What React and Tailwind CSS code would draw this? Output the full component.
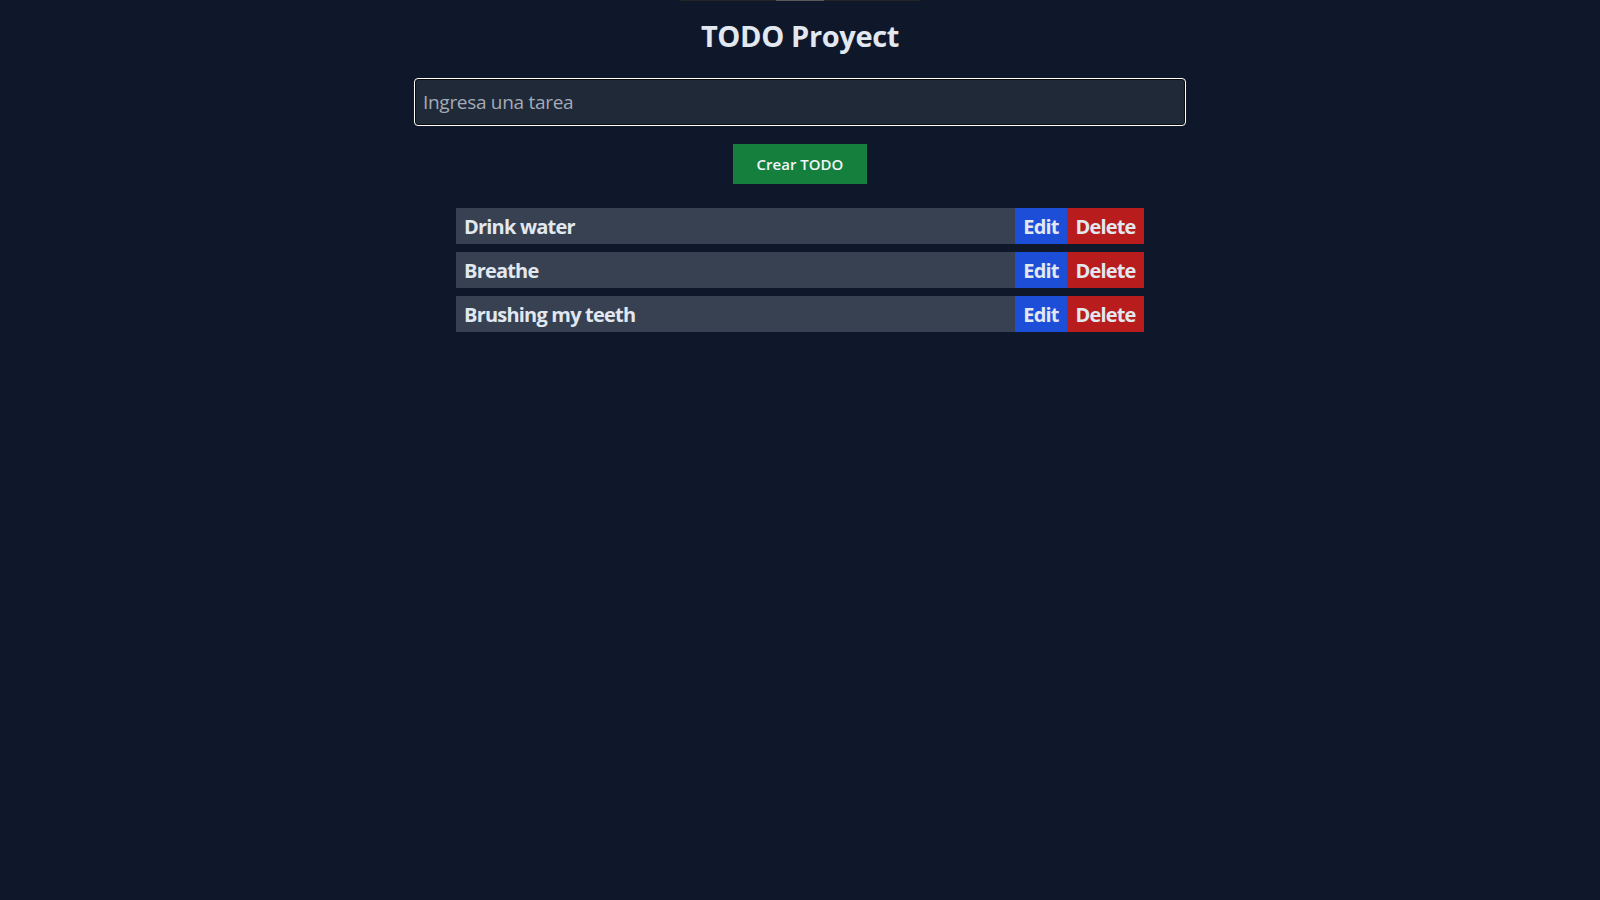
import { useState } from 'react';

const initialTodos = ['Drink water', 'Breathe', 'Brushing my teeth'];

const App = () => {
    const [todos] = useState(initialTodos);

    return (
        <div className="min-h-screen w-full bg-[#0f172a] flex flex-col items-center font-['Open_Sans','Noto_Sans',sans-serif] text-slate-200">
            {/* scrollbar remnant */}
            <div className="w-[241px] h-px bg-[#222326] flex justify-center">
                <div className="w-[48px] h-px bg-[#5a5a5c]"></div>
            </div>

            <h1 className="mt-[17px] text-[29px] font-bold leading-9 tracking-[-0.35px] text-[#e2e8f0]">TODO Proyect</h1>

            <input
                type="text"
                placeholder="Ingresa una tarea"
                className="mt-[24px] w-[772px] h-12 px-2 rounded border border-white bg-[#1f2937] text-[19px] tracking-[-0.3px] text-slate-200 placeholder:text-[#a3abb8] shadow-[inset_0_0_0_1px_#0b0b0b] outline-none"
            />

            <button className="mt-[18px] w-[134px] h-10 bg-[#15803d] text-[15px] font-semibold text-slate-100">
                Crear TODO
            </button>

            <ul className="mt-6 w-[688px] flex flex-col gap-2">
                {todos.map((todo) => (
                    <li key={todo} className="flex h-9 bg-[#374151] text-[20px] font-bold tracking-[-0.8px] text-[#e2e8f0]">
                        <span className="flex-1 flex items-center px-2 pt-px">{todo}</span>
                        <button className="w-[52px] pt-px bg-[#1d4ed8]">Edit</button>
                        <button className="w-[77px] pt-px bg-[#b91c1c]">Delete</button>
                    </li>
                ))}
            </ul>
        </div>
    );
};

export default App;
